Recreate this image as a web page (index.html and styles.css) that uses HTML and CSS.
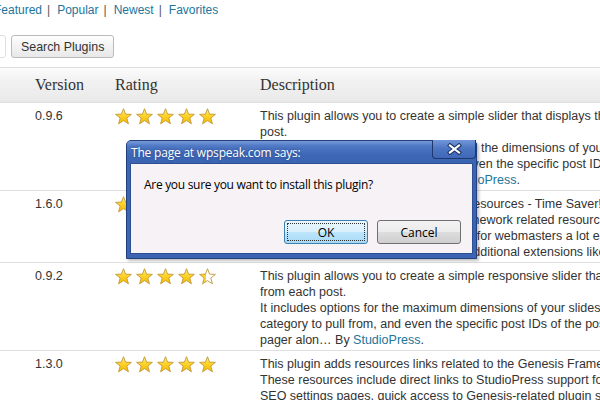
FILE: index.html
```html
<!DOCTYPE html>
<html lang="en">

<head>
    <meta charset="UTF-8">
    <title>Install Plugins</title>
    <link rel="stylesheet" href="styles.css">
</head>

<body>
    <svg class="defs" width="0" height="0">
        <defs>
            <linearGradient id="starFill" x1="0" y1="0" x2="0" y2="1">
                <stop offset="0" stop-color="#fff096" />
                <stop offset="0.45" stop-color="#ffd42a" />
                <stop offset="1" stop-color="#f0b800" />
            </linearGradient>
            <linearGradient id="halfFill" x1="0" y1="0" x2="1" y2="0">
                <stop offset="0.42" stop-color="#ffd42a" />
                <stop offset="0.42" stop-color="#ffffff" />
            </linearGradient>
            <symbol id="star" viewBox="0 0 20 20">
                <path d="M10 0.8 L12.4 7.2 L19.3 7.5 L13.9 11.8 L15.8 18.6 L10 14.8 L4.2 18.6 L6.1 11.8 L0.7 7.5 L7.6 7.2 Z" fill="url(#starFill)" stroke="#c49a3c" stroke-width="1.1" stroke-linejoin="round" />
            </symbol>
            <symbol id="star-half" viewBox="0 0 20 20">
                <path d="M10 0.8 L12.4 7.2 L19.3 7.5 L13.9 11.8 L15.8 18.6 L10 14.8 L4.2 18.6 L6.1 11.8 L0.7 7.5 L7.6 7.2 Z" fill="url(#halfFill)" stroke="#c49a3c" stroke-width="1.1" stroke-linejoin="round" />
            </symbol>
        </defs>
    </svg>

    <div class="wrap">
        <ul class="subsubsub">
            <li><a href="#">Featured</a><span class="sep">|</span></li>
            <li><a href="#">Popular</a><span class="sep">|</span></li>
            <li><a href="#">Newest</a><span class="sep">|</span></li>
            <li><a href="#">Favorites</a></li>
        </ul>

        <div class="search-row">
            <span class="search-input"></span>
            <button class="button">Search Plugins</button>
        </div>

        <div class="plugins">
            <div class="row head">
                <div>Version</div>
                <div>Rating</div>
                <div>Description</div>
            </div>

            <div class="row">
                <div>0.9.6</div>
                <div class="stars">
                    <svg><use href="#star" /></svg><svg><use href="#star" /></svg><svg><use href="#star" /></svg><svg><use href="#star" /></svg><svg><use href="#star" /></svg>
                </div>
                <div class="desc">
                    <span>This plugin allows you to create a simple slider that displays the featured image from each</span>
                    <span>post.</span>
                    <span>It includes options to very easily control the dimensions of your slideshow, choose which</span>
                    <span>category to pull your posts from, and even the specific post IDs of the posts you want to display.</span>
                    <span>Also a pager and navigation… By <a href="#">StudioPress</a>.</span>
                </div>
            </div>

            <div class="row">
                <div>1.6.0</div>
                <div class="stars">
                    <svg><use href="#star" /></svg><svg><use href="#star" /></svg><svg><use href="#star" /></svg><svg><use href="#star" /></svg><svg><use href="#star" /></svg>
                </div>
                <div class="desc">
                    <span>Quick links to all Genesis Framework resources - Time Saver!</span>
                    <span>This plugin adds links for Genesis Framework related resources to the admin bar.</span>
                    <span>It makes the work of web builders, and for webmasters a lot easier.</span>
                    <span>Also supports third-party plugins and additional extensions like Prose.</span>
                </div>
            </div>

            <div class="row">
                <div>0.9.2</div>
                <div class="stars">
                    <svg><use href="#star" /></svg><svg><use href="#star" /></svg><svg><use href="#star" /></svg><svg><use href="#star" /></svg><svg><use href="#star-half" /></svg>
                </div>
                <div class="desc">
                    <span>This plugin allows you to create a simple responsive slider that displays the featured image</span>
                    <span>from each post.</span>
                    <span>It includes options for the maximum dimensions of your slideshow, choose which</span>
                    <span>category to pull from, and even the specific post IDs of the posts you want to display.</span>
                    <span>pager alon… By <a href="#">StudioPress</a>.</span>
                </div>
            </div>

            <div class="row">
                <div>1.3.0</div>
                <div class="stars">
                    <svg><use href="#star" /></svg><svg><use href="#star" /></svg><svg><use href="#star" /></svg><svg><use href="#star" /></svg><svg><use href="#star" /></svg>
                </div>
                <div class="desc">
                    <span>This plugin adds resources links related to the Genesis Framework to the admin bar.</span>
                    <span>These resources include direct links to StudioPress support forums, the Genesis</span>
                    <span>SEO settings pages, quick access to Genesis-related plugin settings and more.</span>
                    <span>It also supports child themes.</span>
                </div>
            </div>
        </div>
    </div>

    <div class="dialog">
        <div class="dlg-title">
            <span>The page at wpspeak.com says:</span>
            <span class="dlg-close">
                <svg width="17" height="12" viewBox="0 0 17 12">
                    <path d="M4 2.5 L13 9.5 M13 2.5 L4 9.5" stroke="#1d3466" stroke-width="4.2" stroke-linecap="square" />
                    <path d="M4 2.5 L13 9.5 M13 2.5 L4 9.5" stroke="#ffffff" stroke-width="2.2" stroke-linecap="square" />
                </svg>
            </span>
        </div>
        <div class="dlg-body">
            <p class="dlg-msg">Are you sure you want to install this plugin?</p>
            <div class="dlg-actions">
                <button class="dlg-btn ok"><span>OK</span></button>
                <button class="dlg-btn">Cancel</button>
            </div>
        </div>
    </div>
</body>

</html>
```

FILE: styles.css
```css
body {
    margin: 0;
    padding: 0;
    background-color: #fff;
    font-family: "Liberation Sans", Arial, sans-serif;
    font-size: 12px;
    color: #333;
    overflow: hidden;
    width: 600px;
    height: 400px;
    position: relative;
}

.defs {
    position: absolute;
}

a {
    color: #21759b;
    text-decoration: none;
}

.subsubsub {
    list-style: none;
    margin: 0 0 0 -6px;
    padding: 0;
    display: flex;
    line-height: 20px;
    white-space: nowrap;
}

.subsubsub .sep {
    color: #555;
    margin: 0 7px 0 5px;
}

.search-row {
    display: flex;
    align-items: center;
    margin-top: 15px;
    height: 23px;
}

.search-input {
    width: 200px;
    height: 21px;
    margin-left: -196px;
    border: 1px solid #dfdfdf;
    border-radius: 3px;
    background: #fff;
}

.button {
    margin-left: 5px;
    height: 23px;
    padding: 0 9px;
    border: 1px solid #bbb;
    border-radius: 3px;
    background: linear-gradient(#fefefe, #f0f0f0 60%, #e8e8e8);
    font-family: "Liberation Sans", Arial, sans-serif;
    font-size: 12.4px;
    color: #333;
}

.plugins {
    margin-top: 9px;
    width: 780px;
    border-top: 1px solid #dfdfdf;
}

.row {
    display: grid;
    grid-template-columns: 80px 145px 1fr;
    padding: 5px 0 2px 35px;
    border-bottom: 1px solid #dfdfdf;
    line-height: 16px;
    font-size: 12.5px;
}

.row.head {
    height: 34px;
    padding: 0 0 0 35px;
    box-sizing: content-box;
    align-items: center;
    background: linear-gradient(#fcfcfc, #f1f1f1 40%, #ececec 80%, #e8e8e8);
    font-family: "Liberation Serif", "Times New Roman", serif;
    font-size: 16px;
    color: #333;
}

.stars {
    display: flex;
    gap: 4px;
    height: 16px;
}

.stars svg {
    width: 17px;
    height: 17px;
}

.desc span {
    display: block;
    white-space: nowrap;
}

.dialog {
    position: absolute;
    left: 126px;
    top: 140px;
    width: 343px;
    padding: 0 3px 4px;
    border: 1px solid #22407c;
    border-radius: 5px 5px 0 0;
    background: #3c64b2;
    box-shadow: 2px 2px 3px rgba(0, 0, 0, 0.25);
    font-family: "Open Sans", "Noto Sans", sans-serif;
}

.dlg-title {
    height: 22px;
    margin: 0 -3px;
    padding: 0 4px;
    display: flex;
    align-items: center;
    border-radius: 4px 4px 0 0;
    background: linear-gradient(#769ad9, #4f78c4 5px, #3f68b7 60%, #3a63b2);
    color: #fff;
    font-size: 12px;
    letter-spacing: -0.2px;
    text-shadow: 0 0 3px rgba(20, 40, 90, 0.6);
}

.dlg-close {
    position: absolute;
    right: 0;
    top: -1px;
    width: 42px;
    height: 18px;
    display: flex;
    align-items: center;
    justify-content: center;
    border: 1px solid #1e386e;
    border-top: 0;
    border-radius: 0 0 4px 4px;
    background: linear-gradient(#7196d8, #4b74c1 50%, #3f68b8);
}

.dlg-body {
    padding: 13px 11px 9px 13px;
    border: 1px solid #2d4f93;
    background: #f6f2f6;
}

.dlg-msg {
    margin: 0;
    line-height: 16px;
    font-size: 12px;
    letter-spacing: -0.3px;
    color: #000;
}

.dlg-actions {
    display: flex;
    justify-content: flex-end;
    gap: 9px;
    margin-top: 27px;
}

.dlg-btn {
    width: 84px;
    height: 24px;
    padding: 0;
    border: 1px solid #707070;
    border-radius: 3px;
    background: linear-gradient(#f3f3f3, #ebebeb 50%, #dddddd 51%, #cfcfcf);
    font-family: "Open Sans", "Noto Sans", sans-serif;
    font-size: 12px;
    color: #000;
}

.dlg-btn.ok {
    border-color: #3c7fb1;
    background: linear-gradient(#eaf6fd, #d9f0fc 50%, #bee6fd 51%, #a7d9f5);
    padding: 2px;
}

.dlg-btn.ok span {
    display: flex;
    height: 100%;
    align-items: center;
    justify-content: center;
    border: 1px dotted #333;
    box-sizing: border-box;
}
```
